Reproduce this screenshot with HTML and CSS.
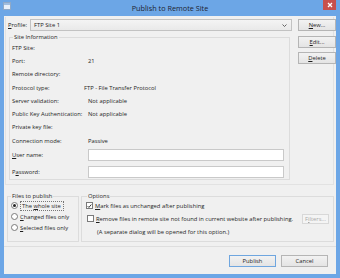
FILE: index.html
```html
<!DOCTYPE html>
<html>
<head>
<meta charset="utf-8">
<title>Publish to Remote Site</title>
<link rel="stylesheet" href="styles.css">
</head>
<body>
<div class="window">
	<div class="titlebar">
		<svg class="app-icon" width="8" height="8" viewBox="0 0 8 8"><rect x="0.5" y="0.5" width="7" height="7" fill="#e8f0fa" stroke="#8fa9c8"/><rect x="1" y="1" width="6" height="2" fill="#9fbde0"/></svg>
		<span class="title">Publish to Remote Site</span>
		<span class="close"><svg width="6" height="6" viewBox="0 0 6 6"><path d="M1 1L5 5M5 1L1 5" stroke="#fff" stroke-width="1.3"/></svg></span>
	</div>
	<div class="client">
		<div class="top-panel">
			<div class="main-col">
				<div class="profile-row">
					<span class="profile-label"><u>P</u>rofile:</span>
					<div class="combo">FTP Site 1<svg class="chevron" width="5" height="3" viewBox="0 0 5 3"><path d="M0.5 0.5L2.5 2.5L4.5 0.5" fill="none" stroke="#555" stroke-width="0.9"/></svg></div>
				</div>
				<fieldset class="group site-info">
					<legend>Site Information</legend>
					<div class="info-grid">
						<span>FTP Site:</span><span></span>
						<span>Port:</span><span>21</span>
						<span>Remote directory:</span><span></span>
						<span>Protocol type:</span><span class="shift">FTP - File Transfer Protocol</span>
						<span>Server validation:</span><span>Not applicable</span>
						<span>Public Key Authentication:</span><span>Not applicable</span>
						<span>Private key file:</span><span></span>
						<span>Connection mode:</span><span>Passive</span>
					</div>
					<div class="field-row"><span><u>U</u>ser name:</span><div class="textbox"></div></div>
					<div class="field-row pw"><span>P<u>a</u>ssword:</span><div class="textbox"></div></div>
				</fieldset>
			</div>
			<div class="side-col">
				<div class="btn"><u>N</u>ew...</div>
				<div class="btn"><u>E</u>dit...</div>
				<div class="btn"><u>D</u>elete</div>
			</div>
		</div>
		<div class="lower">
			<fieldset class="group files">
				<legend>Files to publish</legend>
				<div class="opt-row"><span class="radio on"></span><span class="focus">The <u>w</u>hole site</span></div>
				<div class="opt-row"><span class="radio"></span><span><u>C</u>hanged files only</span></div>
				<div class="opt-row"><span class="radio"></span><span><u>S</u>elected files only</span></div>
			</fieldset>
			<fieldset class="group options">
				<legend>Options</legend>
				<div class="opt-row"><span class="check on"><svg width="6" height="6" viewBox="0 0 6 6"><path d="M0.8 3.2L2.3 4.7L5.2 1.2" fill="none" stroke="#222" stroke-width="1.1"/></svg></span><span><u>M</u>ark files as unchanged after publishing</span></div>
				<div class="opt-row second"><span class="check"></span><span><u>R</u>emove files in remote site not found in current website after publishing.</span><div class="btn small disabled">F<u>i</u>lters...</div></div>
				<div class="note">(A separate dialog will be opened for this option.)</div>
			</fieldset>
		</div>
		<div class="actions">
			<div class="btn wide default">Publish</div>
			<div class="btn wide">Cancel</div>
		</div>
	</div>
</div>
</body>
</html>
```

FILE: styles.css
```css
* {
	box-sizing: border-box;
}
body {
	margin: 0;
	background-color: #6ca6e6;
	font-family: "Open Sans", "Noto Sans", sans-serif;
	font-size: 5.8px;
	color: #1e1e1e;
}
u {
	text-decoration: underline;
}
.window {
	width: 340px;
	height: 278px;
	background-color: #6ca6e6;
}
.titlebar {
	position: relative;
	height: 16px;
	display: flex;
	align-items: center;
	justify-content: center;
}
.app-icon {
	position: absolute;
	left: 3px;
	top: 2px;
}
.title {
	font-size: 7.3px;
	color: #1c2430;
	margin-top: -1px;
}
.close {
	position: absolute;
	right: 4px;
	top: 0;
	width: 13px;
	height: 10px;
	background-color: #c7504c;
	display: flex;
	align-items: center;
	justify-content: center;
}
.client {
	margin: 0 4px;
	height: 258px;
	background-color: #f0f0f0;
	padding-top: 1px;
}
.top-panel {
	margin-left: 1px;
	width: 329px;
	height: 168px;
	border: 1px solid #e2e2e2;
	border-top: none;
	display: flex;
	padding: 2px 0 0 1px;
}
.main-col {
	width: 287px;
}
.profile-row {
	display: flex;
	align-items: center;
	height: 12px;
	margin-left: 1px;
}
.profile-label {
	width: 22px;
}
.combo {
	width: 262px;
	height: 12px;
	border: 1px solid #c2c2c2;
	background: linear-gradient(#f4f4f4, #e9e9e9);
	padding-left: 3px;
	display: flex;
	align-items: center;
	justify-content: space-between;
	padding-right: 4px;
}
.group {
	margin: 0;
	border: 1px solid #dcdcdc;
	padding: 0 0 0 2px;
}
.group legend {
	padding: 0 1px;
	margin-left: 1px;
	line-height: 8px;
	height: 8px;
}
.site-info {
	margin: 2px 0 0 2px;
	width: 281px;
	height: 147px;
}
.info-grid {
	display: grid;
	grid-template-columns: 76px 1fr;
	grid-auto-rows: 13.3px;
	align-items: center;
}
.shift {
	margin-left: -4px;
}
.field-row {
	display: grid;
	grid-template-columns: 76px 196px;
	align-items: center;
	margin-top: 1.3px;
}
.field-row.pw {
	margin-top: 5px;
}
.textbox {
	height: 12px;
	background-color: #fff;
	border: 1px solid #c9c9c9;
}
.side-col {
	margin-left: 6px;
	display: flex;
	flex-direction: column;
	gap: 4.5px;
}
.btn {
	width: 38px;
	height: 12px;
	border: 1px solid #b5b5b5;
	background: linear-gradient(#f2f2f2, #e4e4e4);
	display: flex;
	align-items: center;
	justify-content: center;
}
.btn.wide {
	width: 47px;
}
.btn.default {
	border-color: #6fa6df;
}
.btn.small {
	width: 27px;
	height: 10px;
	margin-left: auto;
}
.btn.disabled {
	color: #a8a8a8;
	border-color: #d8d8d8;
	background: #f4f4f4;
}
.lower {
	display: flex;
	gap: 2px;
	margin: 7px 0 0 3px;
}
.files {
	width: 72px;
	height: 50px;
}
.options {
	width: 253px;
	height: 50px;
	padding: 0 4px 0 4px;
}
.opt-row {
	display: flex;
	align-items: center;
	height: 11px;
	gap: 2px;
}
.opt-row.second {
	margin-top: 2px;
	padding-left: 1px;
}
.radio {
	width: 7px;
	height: 7px;
	border-radius: 50%;
	border: 1px solid #7a7a7a;
	background-color: #fff;
	margin-left: 1px;
	display: flex;
	align-items: center;
	justify-content: center;
}
.radio.on::after {
	content: "";
	width: 3px;
	height: 3px;
	border-radius: 50%;
	background-color: #222;
}
.focus {
	border: 1px dotted #777;
	padding: 0 2px 0 1px;
	line-height: 8px;
}
.check {
	width: 7px;
	height: 7px;
	border: 1px solid #7a7a7a;
	background-color: #fff;
	display: flex;
	align-items: center;
	justify-content: center;
}
.note {
	margin: 4px 0 0 11px;
}
.actions {
	margin-top: 4px;
	border-top: 1px solid #dedede;
	display: flex;
	justify-content: flex-end;
	gap: 5px;
	padding: 8px 8px 0 0;
}
```
